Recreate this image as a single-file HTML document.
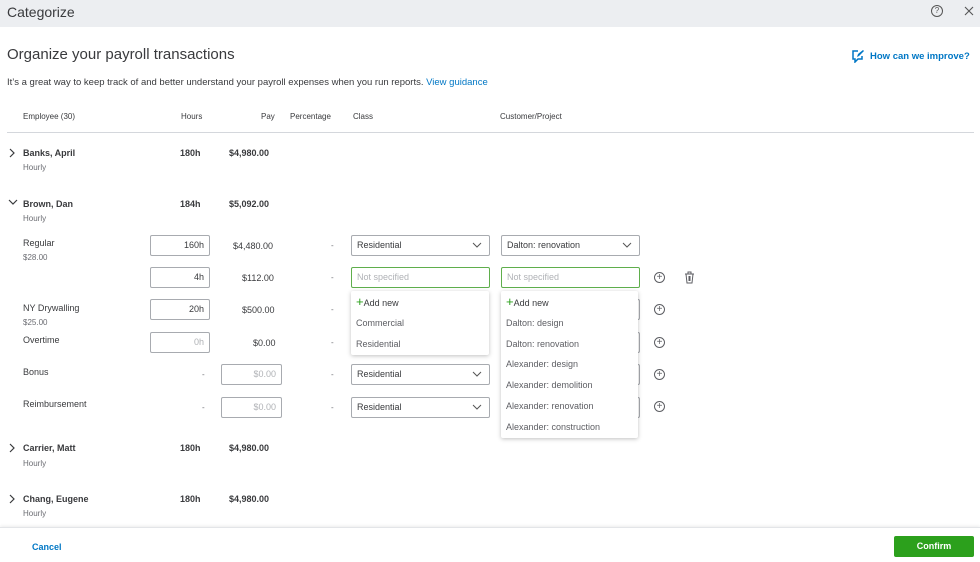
<!DOCTYPE html>
<html><head><style>
*{box-sizing:border-box;margin:0;padding:0}
body{width:980px;height:562px;overflow:hidden;background:#fff;font-family:"Liberation Sans",Arial,sans-serif;color:#393a3d;position:relative}
.a{position:absolute;white-space:nowrap}
.hdr{left:0;top:0;width:980px;height:27px;background:#eceef1}
.b{font-weight:bold;font-size:9px;color:#393a3d}
.s{font-size:8px;color:#6b6c72}
.n{font-size:9px;color:#393a3d}
.box{position:absolute;border:1px solid #a8abb0;border-radius:2px;background:#fff;font-size:9px;height:21px;line-height:19px;padding:0 5px}
.r{text-align:right}
.ph{color:#b0b2b6}
.chev{position:absolute;right:7px;top:4px}
.dd{position:absolute;background:#fff;box-shadow:0 1px 4px rgba(0,0,0,.25);border-radius:2px;font-size:9px;color:#5d5e63}
.dd div{height:20.8px;line-height:20.8px;padding-left:5px}
.pl{position:absolute;width:11px;height:11px;border:1px solid #5d5e63;border-radius:50%;font-size:10px;line-height:9px;text-align:center;color:#5d5e63}
</style></head><body>
<div class="a hdr"></div>
<div class="a" style="left:7px;top:4px;font-size:14px;color:#393a3d">Categorize</div>
<div class="a" style="left:931px;top:5px;width:12px;height:12px;border:1px solid #555;border-radius:50%;font-size:8px;text-align:center;line-height:10px;color:#555">?</div>
<svg class="a" style="left:964px;top:6px" width="10" height="10"><path d="M1 1l8 8M9 1l-8 8" stroke="#555" stroke-width="1.1"/></svg>
<div class="a" style="left:7px;top:46px;font-size:15px;color:#393a3d">Organize your payroll transactions</div>
<svg class="a" style="left:851px;top:49px" width="14" height="14" viewBox="0 0 14 14"><path d="M7 2H2v8h2v3l3-3h4V7" fill="none" stroke="#0077c5" stroke-width="1.5"/><path d="M6 8l1-3 5-4 1 1-5 5z" fill="#0077c5"/></svg>
<div class="a" style="left:870px;top:51px;font-size:9.5px;font-weight:bold;color:#0077c5">How can we improve?</div>
<div class="a" style="left:7px;top:77px;font-size:9.5px;color:#393a3d">It’s a great way to keep track of and better understand your payroll expenses when you run reports. <span style="color:#0077c5">View guidance</span></div>
<div class="a s" style="left:23px;top:112px;color:#393a3d">Employee (30)</div>
<div class="a s" style="left:181px;top:112px;color:#393a3d">Hours</div>
<div class="a s" style="left:261px;top:112px;color:#393a3d">Pay</div>
<div class="a s" style="left:290px;top:112px;color:#393a3d">Percentage</div>
<div class="a s" style="left:353px;top:112px;color:#393a3d">Class</div>
<div class="a s" style="left:500px;top:112px;color:#393a3d">Customer/Project</div>
<div class="a" style="left:7px;top:132px;width:967px;height:1px;background:#d4d7dc"></div>

<svg class="a" style="left:9px;top:148px" width="7" height="10"><path d="M1 1l4 4-4 4" fill="none" stroke="#393a3d" stroke-width="1.2"/></svg>
<div class="a b" style="left:23px;top:148px">Banks, April</div><div class="a s" style="left:23px;top:163px">Hourly</div>
<div class="a b" style="left:180px;top:148px">180h</div><div class="a b" style="left:229px;top:148px">$4,980.00</div>

<svg class="a" style="left:8px;top:199px" width="10" height="7"><path d="M1 1l4 4 4-4" fill="none" stroke="#393a3d" stroke-width="1.2"/></svg>
<div class="a b" style="left:23px;top:199px">Brown, Dan</div><div class="a s" style="left:23px;top:214px">Hourly</div>
<div class="a b" style="left:180px;top:199px">184h</div><div class="a b" style="left:229px;top:199px">$5,092.00</div>

<div class="a n" style="left:23px;top:238px">Regular</div><div class="a s" style="left:23px;top:253px">$28.00</div>
<div class="box r" style="left:150px;top:235px;width:60px">160h</div>
<div class="a n" style="left:233px;top:241px">$4,480.00</div>
<div class="a s" style="left:331px;top:241px">-</div>
<div class="box" style="left:351px;top:235px;width:139px">Residential<svg class="chev" width="10" height="10"><path d="M1 3l4 4 4-4" fill="none" stroke="#555"/></svg></div>
<div class="box" style="left:501px;top:235px;width:139px">Dalton: renovation<svg class="chev" width="10" height="10"><path d="M1 3l4 4 4-4" fill="none" stroke="#555"/></svg></div>

<div class="box r" style="left:150px;top:267px;width:60px">4h</div>
<div class="a n" style="left:242px;top:273px">$112.00</div>
<div class="a s" style="left:331px;top:273px">-</div>
<div class="box ph" style="left:351px;top:267px;width:139px;border:1.5px solid #5fae4c;line-height:18px">Not specified</div>
<div class="box ph" style="left:501px;top:267px;width:139px;border:1.5px solid #5fae4c;line-height:18px">Not specified</div>
<div class="pl" style="left:654px;top:272px">+</div>
<svg class="a" style="left:684px;top:271px" width="11" height="13"><path d="M1 3h9M4 3V1h3v2M2 3l1 9h5l1-9M5 5v5M6 5v5" fill="none" stroke="#5d5e63"/></svg>

<div class="a n" style="left:23px;top:303px">NY Drywalling</div><div class="a s" style="left:23px;top:318px">$25.00</div>
<div class="box r" style="left:150px;top:299px;width:60px">20h</div>
<div class="a n" style="left:242px;top:305px">$500.00</div>
<div class="a s" style="left:331px;top:305px">-</div>
<div class="box" style="left:501px;top:299px;width:139px"></div>
<div class="pl" style="left:654px;top:304px">+</div>

<div class="a n" style="left:23px;top:335px">Overtime</div>
<div class="box r ph" style="left:150px;top:332px;width:60px">0h</div>
<div class="a n" style="left:253px;top:338px">$0.00</div>
<div class="a s" style="left:331px;top:338px">-</div>
<div class="box" style="left:501px;top:332px;width:139px"></div>
<div class="pl" style="left:654px;top:337px">+</div>

<div class="a n" style="left:23px;top:367px">Bonus</div>
<div class="a s" style="left:202px;top:370px">-</div>
<div class="box r ph" style="left:221px;top:364px;width:61px">$0.00</div>
<div class="a s" style="left:331px;top:370px">-</div>
<div class="box" style="left:351px;top:364px;width:139px">Residential<svg class="chev" width="10" height="10"><path d="M1 3l4 4 4-4" fill="none" stroke="#555"/></svg></div>
<div class="box" style="left:501px;top:364px;width:139px"></div>
<div class="pl" style="left:654px;top:369px">+</div>

<div class="a n" style="left:23px;top:399px">Reimbursement</div>
<div class="a s" style="left:202px;top:403px">-</div>
<div class="box r ph" style="left:221px;top:397px;width:61px">$0.00</div>
<div class="a s" style="left:331px;top:403px">-</div>
<div class="box" style="left:351px;top:397px;width:139px">Residential<svg class="chev" width="10" height="10"><path d="M1 3l4 4 4-4" fill="none" stroke="#555"/></svg></div>
<div class="box" style="left:501px;top:397px;width:139px"></div>
<div class="pl" style="left:654px;top:401px">+</div>

<div class="dd" style="left:351px;top:291px;width:138px;height:64px;padding-top:1px">
<div style="color:#393a3d"><span style="color:#2ca01c;font-size:13px">+</span>Add new</div><div>Commercial</div><div>Residential</div></div>
<div class="dd" style="left:501px;top:291px;width:137px;height:147px;padding-top:1px">
<div style="color:#393a3d"><span style="color:#2ca01c;font-size:13px">+</span>Add new</div><div>Dalton: design</div><div>Dalton: renovation</div><div>Alexander: design</div><div>Alexander: demolition</div><div>Alexander: renovation</div><div>Alexander: construction</div></div>

<svg class="a" style="left:9px;top:443px" width="7" height="10"><path d="M1 1l4 4-4 4" fill="none" stroke="#393a3d" stroke-width="1.2"/></svg>
<div class="a b" style="left:23px;top:443px">Carrier, Matt</div><div class="a s" style="left:23px;top:459px">Hourly</div>
<div class="a b" style="left:180px;top:443px">180h</div><div class="a b" style="left:229px;top:443px">$4,980.00</div>
<svg class="a" style="left:9px;top:494px" width="7" height="10"><path d="M1 1l4 4-4 4" fill="none" stroke="#393a3d" stroke-width="1.2"/></svg>
<div class="a b" style="left:23px;top:494px">Chang, Eugene</div><div class="a s" style="left:23px;top:509px">Hourly</div>
<div class="a b" style="left:180px;top:494px">180h</div><div class="a b" style="left:229px;top:494px">$4,980.00</div>

<div class="a" style="left:0;top:527px;width:980px;height:35px;background:#fff;border-top:1px solid #e3e5e8;box-shadow:0 -1px 3px rgba(0,0,0,.08)"></div>
<div class="a" style="left:32px;top:542px;font-size:9px;font-weight:bold;color:#0077c5">Cancel</div>
<div class="a" style="left:894px;top:536px;width:80px;height:21px;background:#2ca01c;border-radius:2px;color:#fff;font-size:9px;font-weight:bold;text-align:center;line-height:21px">Confirm</div>
</body></html>
